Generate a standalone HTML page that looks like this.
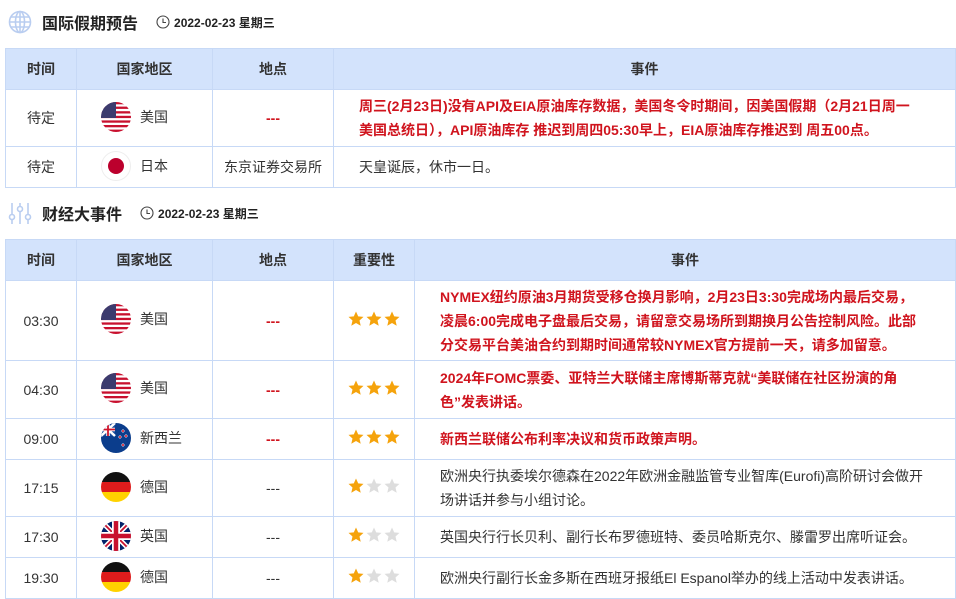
<!DOCTYPE html>
<html><head><meta charset="utf-8"><style>
*{margin:0;padding:0;box-sizing:border-box}
body{width:956px;height:598px;overflow:hidden;background:#fff;font-family:"Liberation Sans","Noto Sans CJK SC",sans-serif;font-size:14px;color:#333;position:relative}
.title{position:absolute;left:8px;height:30px;display:flex;align-items:center}
.title .t{font-size:16px;font-weight:bold;color:#222;margin-left:10px}
.title .d{font-size:12px;font-weight:bold;color:#222;margin-left:18px;display:flex;align-items:center}
.title .d svg{margin-right:4px}
table{position:absolute;left:5px;border-collapse:collapse;table-layout:fixed;width:951px}
td,th{border:1px solid #c7d9f6;text-align:center;vertical-align:middle;padding:0}
th{background:#d3e3fc;font-weight:bold;color:#333;font-size:14px;height:41px}
td.ev{text-align:left;padding-left:25px;white-space:nowrap;line-height:24px}
.red{color:#d0141e;font-weight:bold}
.flag{display:inline-flex;align-items:center;width:100%;padding-left:24px}
.flag svg{margin-right:9px;flex:none}
.dash{color:#d0141e;font-weight:bold}
.st{font-size:0;line-height:0}
.st svg{display:inline-block;margin:-4px 1px 0;vertical-align:middle}
</style></head><body>
<svg width="0" height="0" style="position:absolute"><defs>
<clipPath id="c"><circle cx="15" cy="15" r="15"/></clipPath>
<g id="us"><g clip-path="url(#c)"><rect width="30" height="30" fill="#fff"/><g fill="#c8102e"><rect y="0" width="30" height="2.3"/><rect y="4.6" width="30" height="2.3"/><rect y="9.2" width="30" height="2.3"/><rect y="13.8" width="30" height="2.3"/><rect y="18.4" width="30" height="2.3"/><rect y="23" width="30" height="2.3"/><rect y="27.6" width="30" height="2.4"/></g><rect width="15" height="16" fill="#3c3b6e"/></g></g>
<g id="de"><g clip-path="url(#c)"><rect width="30" height="10" fill="#111"/><rect y="10" width="30" height="10" fill="#dd1c1c"/><rect y="20" width="30" height="10" fill="#ffd200"/></g></g>
<path id="s" d="M8 0.5L10.2 5.4L15.5 5.9L11.5 9.5L12.7 14.8L8 12L3.3 14.8L4.5 9.5L0.5 5.9L5.8 5.4Z"/>
</defs></svg>

<div class="title" style="top:7px">
<svg width="24" height="24" viewBox="0 0 24 24" fill="none" stroke="#b9cdf0" stroke-width="1.6"><circle cx="12" cy="12" r="10.5"/><ellipse cx="12" cy="12" rx="4.5" ry="10.5"/><line x1="1.5" y1="12" x2="22.5" y2="12"/><line x1="3" y1="7" x2="21" y2="7"/><line x1="3" y1="17" x2="21" y2="17"/><line x1="12" y1="1.5" x2="12" y2="22.5"/></svg>
<span class="t">国际假期预告</span>
<span class="d"><svg width="14" height="14" viewBox="0 0 14 14" fill="none" stroke="#444" stroke-width="1.1"><circle cx="7" cy="7" r="6"/><path d="M7 3.5V7.5H10"/></svg>2022-02-23 星期三</span>
</div>

<table style="top:48px">
<colgroup><col style="width:71px"><col style="width:136px"><col style="width:121px"><col></colgroup>
<tr><th>时间</th><th>国家地区</th><th>地点</th><th>事件</th></tr>
<tr style="height:57px"><td>待定</td><td><span class="flag"><svg width="30" height="30"><use href="#us"/></svg>美国</span></td><td class="dash">---</td><td class="ev red">周三(2月23日)没有API及EIA原油库存数据，美国冬令时期间，因美国假期（2月21日周一<br>美国总统日），API原油库存 推迟到周四05:30早上，EIA原油库存推迟到 周五00点。</td></tr>
<tr style="height:41px"><td>待定</td><td><span class="flag"><svg width="30" height="30"><circle cx="15" cy="15" r="14.5" fill="#fff" stroke="#eee"/><circle cx="15" cy="15" r="8" fill="#bc002d"/></svg>日本</span></td><td>东京证券交易所</td><td class="ev">天皇诞辰，休市一日。</td></tr>
</table>

<div class="title" style="top:198px">
<svg width="24" height="24" viewBox="0 0 24 24" fill="none" stroke="#b9cdf0" stroke-width="1.6"><line x1="4" y1="2" x2="4" y2="13"/><circle cx="4" cy="16" r="2.5"/><line x1="4" y1="19" x2="4" y2="23"/><line x1="12" y1="2" x2="12" y2="5"/><circle cx="12" cy="8" r="2.5"/><line x1="12" y1="11" x2="12" y2="23"/><line x1="20" y1="2" x2="20" y2="13"/><circle cx="20" cy="16" r="2.5"/><line x1="20" y1="19" x2="20" y2="23"/></svg>
<span class="t">财经大事件</span>
<span class="d"><svg width="14" height="14" viewBox="0 0 14 14" fill="none" stroke="#444" stroke-width="1.1"><circle cx="7" cy="7" r="6"/><path d="M7 3.5V7.5H10"/></svg>2022-02-23 星期三</span>
</div>

<table style="top:239px">
<colgroup><col style="width:71px"><col style="width:136px"><col style="width:121px"><col style="width:81px"><col></colgroup>
<tr><th>时间</th><th>国家地区</th><th>地点</th><th>重要性</th><th>事件</th></tr>
<tr style="height:80px"><td>03:30</td><td><span class="flag"><svg width="30" height="30"><use href="#us"/></svg>美国</span></td><td class="dash">---</td><td class="st"><svg width="16" height="16"><use href="#s" fill="#f5a30c"/></svg><svg width="16" height="16"><use href="#s" fill="#f5a30c"/></svg><svg width="16" height="16"><use href="#s" fill="#f5a30c"/></svg></td><td class="ev red">NYMEX纽约原油3月期货受移仓换月影响，2月23日3:30完成场内最后交易，<br>凌晨6:00完成电子盘最后交易，请留意交易场所到期换月公告控制风险。此部<br>分交易平台美油合约到期时间通常较NYMEX官方提前一天，请多加留意。</td></tr>
<tr style="height:58px"><td>04:30</td><td><span class="flag"><svg width="30" height="30"><use href="#us"/></svg>美国</span></td><td class="dash">---</td><td class="st"><svg width="16" height="16"><use href="#s" fill="#f5a30c"/></svg><svg width="16" height="16"><use href="#s" fill="#f5a30c"/></svg><svg width="16" height="16"><use href="#s" fill="#f5a30c"/></svg></td><td class="ev red">2024年FOMC票委、亚特兰大联储主席博斯蒂克就“美联储在社区扮演的角<br>色”发表讲话。</td></tr>
<tr style="height:41px"><td>09:00</td><td><span class="flag"><svg width="30" height="30"><g clip-path="url(#c)"><rect width="30" height="30" fill="#0b3d8c"/><rect width="14" height="13" fill="#1a4a9a"/><path d="M0 0L14 13M14 0L0 13" stroke="#fff" stroke-width="2.5"/><path d="M7 0V13M0 6.5H14" stroke="#fff" stroke-width="3.5"/><path d="M7 0V13M0 6.5H14" stroke="#cf142b" stroke-width="1.8"/><g fill="#cf142b" stroke="#fff" stroke-width=".5"><circle cx="22" cy="8" r="1.3"/><circle cx="19" cy="14" r="1.3"/><circle cx="25" cy="13" r="1.3"/><circle cx="22" cy="22" r="1.3"/></g></g></svg>新西兰</span></td><td class="dash">---</td><td class="st"><svg width="16" height="16"><use href="#s" fill="#f5a30c"/></svg><svg width="16" height="16"><use href="#s" fill="#f5a30c"/></svg><svg width="16" height="16"><use href="#s" fill="#f5a30c"/></svg></td><td class="ev red">新西兰联储公布利率决议和货币政策声明。</td></tr>
<tr style="height:57px"><td>17:15</td><td><span class="flag"><svg width="30" height="30"><use href="#de"/></svg>德国</span></td><td>---</td><td class="st"><svg width="16" height="16"><use href="#s" fill="#f5a30c"/></svg><svg width="16" height="16"><use href="#s" fill="#ddd"/></svg><svg width="16" height="16"><use href="#s" fill="#ddd"/></svg></td><td class="ev">欧洲央行执委埃尔德森在2022年欧洲金融监管专业智库(Eurofi)高阶研讨会做开<br>场讲话并参与小组讨论。</td></tr>
<tr style="height:41px"><td>17:30</td><td><span class="flag"><svg width="30" height="30"><g clip-path="url(#c)"><rect width="30" height="30" fill="#012169"/><path d="M0 0L30 30M30 0L0 30" stroke="#fff" stroke-width="5"/><path d="M0 0L30 30M30 0L0 30" stroke="#c8102e" stroke-width="1.8"/><path d="M15 0V30M0 15H30" stroke="#fff" stroke-width="8"/><path d="M15 0V30M0 15H30" stroke="#c8102e" stroke-width="4.5"/></g></svg>英国</span></td><td>---</td><td class="st"><svg width="16" height="16"><use href="#s" fill="#f5a30c"/></svg><svg width="16" height="16"><use href="#s" fill="#ddd"/></svg><svg width="16" height="16"><use href="#s" fill="#ddd"/></svg></td><td class="ev">英国央行行长贝利、副行长布罗德班特、委员哈斯克尔、滕雷罗出席听证会。</td></tr>
<tr style="height:41px"><td>19:30</td><td><span class="flag"><svg width="30" height="30"><use href="#de"/></svg>德国</span></td><td>---</td><td class="st"><svg width="16" height="16"><use href="#s" fill="#f5a30c"/></svg><svg width="16" height="16"><use href="#s" fill="#ddd"/></svg><svg width="16" height="16"><use href="#s" fill="#ddd"/></svg></td><td class="ev">欧洲央行副行长金多斯在西班牙报纸El Espanol举办的线上活动中发表讲话。</td></tr>
</table>
</body></html>
